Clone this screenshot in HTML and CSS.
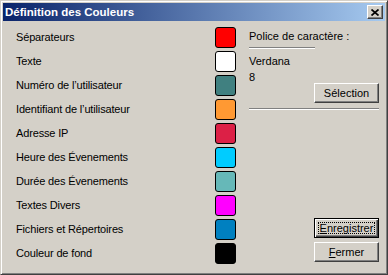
FILE: index.html
```html
<!DOCTYPE html>
<html lang="fr">
<head>
<meta charset="UTF-8">
<title>Définition des Couleurs</title>
<link rel="stylesheet" href="styles.css">
</head>
<body>

<div class="window">
    <div class="titlebar">
        <span class="title">Définition des Couleurs</span>
        <button class="close-btn" title="Fermer">
            <svg width="8" height="7" viewBox="0 0 8 7"><path d="M0.5 0.5 L7.5 6.5 M7.5 0.5 L0.5 6.5" stroke="#000" stroke-width="1.7" fill="none"/></svg>
        </button>
    </div>

    <div class="content">
        <ul class="color-list">
            <li><span>Séparateurs</span><span class="swatch" style="background:#ff0000"></span></li>
            <li><span>Texte</span><span class="swatch" style="background:#ffffff"></span></li>
            <li><span>Numéro de l’utilisateur</span><span class="swatch" style="background:#408080"></span></li>
            <li><span>Identifiant de l’utilisateur</span><span class="swatch" style="background:#ff9933"></span></li>
            <li><span>Adresse IP</span><span class="swatch" style="background:#dc2046"></span></li>
            <li><span>Heure des Évenements</span><span class="swatch" style="background:#00ccff"></span></li>
            <li><span>Durée des Évenements</span><span class="swatch" style="background:#66b8b8"></span></li>
            <li><span>Textes Divers</span><span class="swatch" style="background:#ff00ff"></span></li>
            <li><span>Fichiers et Répertoires</span><span class="swatch" style="background:#0080c0"></span></li>
            <li><span>Couleur de fond</span><span class="swatch" style="background:#000000"></span></li>
        </ul>

        <div class="font-panel">
            <div class="font-label">Police de caractère :</div>
            <div class="etched short"></div>
            <div class="font-info">
                <div>Verdana</div>
                <div>8</div>
            </div>
            <button class="btn select-btn">Sélection</button>
            <div class="etched"></div>

            <div class="actions">
                <button class="btn default"><span class="focus-ring"><u>E</u>nregistrer</span></button>
                <button class="btn"><u>F</u>ermer</button>
            </div>
        </div>
    </div>
</div>

</body>
</html>
```

FILE: styles.css
```css
body { margin:0; background:#d4d0c8; overflow:hidden; font-family:"Liberation Sans", Arial, sans-serif; font-size:11px; color:#000; }

.window {
    width:388px; height:275px; box-sizing:border-box;
    border:1px solid; border-color:#d4d0c8 #404040 #404040 #d4d0c8;
    box-shadow:inset 1px 1px #fff, inset -1px -1px #808080;
    padding:2px;
}

.titlebar {
    height:18px; display:flex; align-items:center; justify-content:space-between;
    padding:0 2px; background:linear-gradient(to right, #0a246a, #a6caf0);
}
.title { color:#fff; font-weight:bold; font-size:11.5px; }

.close-btn {
    width:16px; height:14px; padding:0; box-sizing:border-box;
    display:flex; align-items:center; justify-content:center;
    background:#d4d0c8; border:1px solid; border-color:#fff #404040 #404040 #fff;
    box-shadow:inset -1px -1px #808080;
}

.content { display:flex; padding:4px 0 0 13px; }

.color-list { width:220px; margin:0; padding:0; list-style:none; }
.color-list li { height:24px; display:flex; align-items:center; justify-content:space-between; letter-spacing:-0.15px; }
.swatch { width:21px; height:21px; box-sizing:border-box; border:1px solid #000; border-radius:3px; }

.font-panel { width:130px; height:240px; margin-left:13px; display:flex; flex-direction:column; }
.font-label { margin-top:4px; line-height:14px; }
.etched { height:0; border-top:1px solid #808080; border-bottom:1px solid #fff; margin-top:5px; }
.etched.short { width:66px; margin-top:4px; }
.font-info { margin-top:4px; line-height:16px; }

.btn {
    width:65px; height:20px; padding:0; box-sizing:border-box;
    font-family:inherit; font-size:11px; color:#000; background:#d4d0c8;
    border:1px solid; border-color:#fff #404040 #404040 #fff;
    box-shadow:inset -1px -1px #808080;
}
.select-btn { align-self:flex-end; margin-top:-2px; }

.actions { margin-top:auto; margin-bottom:3px; display:flex; flex-direction:column; align-items:flex-end; gap:4px; }
.btn.default {
    display:flex; border-color:#000;
    box-shadow:inset 1px 1px #fff, inset -1px -1px #404040, inset -2px -2px #808080;
}
.focus-ring { flex:1; margin:3px; border:1px dotted #000; line-height:10px; }
```
